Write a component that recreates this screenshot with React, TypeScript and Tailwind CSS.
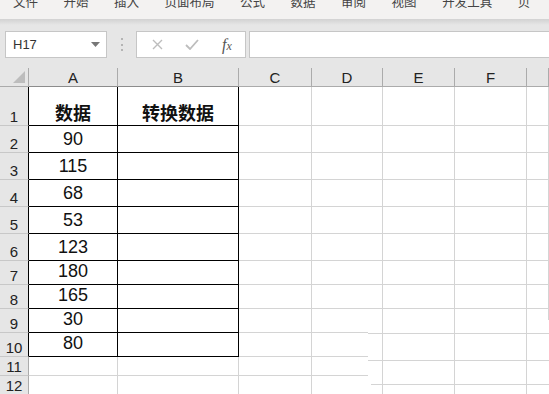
import React from "react";

const TABS = ["文件", "开始", "插入", "页面布局", "公式", "数据", "审阅", "视图", "开发工具", "贝"];

// column widths in px: row header, A..F, G takes the rest
const COLS = ["A", "B", "C", "D", "E", "F", ""];
const ROW_HEIGHTS = [39, 27, 27, 27, 27, 27, 24, 24, 24, 24, 19, 19];
const DATA = [90, 115, 68, 53, 123, 180, 165, 30, 80];

const CJK = "font-['Noto_Sans_CJK_SC','Noto_Sans',sans-serif]";
const NUM = "font-['Liberation_Sans','Noto_Sans_CJK_SC',sans-serif]";

function CornerTriangle() {
  return (
    <svg width="12" height="12" viewBox="0 0 12 12" className="mb-[3px] mr-[3px]">
      <polygon points="12,0 12,12 0,12" fill="#bdbdbd" />
    </svg>
  );
}

function FormulaBar() {
  return (
    <div className="flex h-[43px] items-start bg-[#e6e6e6] pt-[6px]">
      <div className="ml-[5px] flex h-[27px] w-[102px] items-center justify-between border border-[#c6c6c6] bg-white pl-[7px] pr-[6px]">
        <span className={`${NUM} text-[13px] text-[#333]`}>H17</span>
        <svg width="9" height="5" viewBox="0 0 9 5">
          <polygon points="0,0 9,0 4.5,5" fill="#777" />
        </svg>
      </div>
      <div className="ml-[14px] mt-[7px] flex h-[13px] flex-col justify-between">
        <span className="block h-[2px] w-[2px] bg-[#b4b4b4]" />
        <span className="block h-[2px] w-[2px] bg-[#b4b4b4]" />
        <span className="block h-[2px] w-[2px] bg-[#b4b4b4]" />
      </div>
      <div className="ml-[13px] flex h-[27px] w-[110px] items-center border border-[#c6c6c6] bg-white">
        <svg width="11" height="11" viewBox="0 0 11 11" className="ml-[15px]">
          <path d="M1 1 L10 10 M10 1 L1 10" stroke="#bdbdbd" strokeWidth="1.4" />
        </svg>
        <svg width="14" height="11" viewBox="0 0 14 11" className="ml-[22px]">
          <path d="M1 6 L5 10 L13 1" stroke="#bdbdbd" strokeWidth="1.8" fill="none" />
        </svg>
        <span className="ml-[23px] font-['Liberation_Serif',serif] text-[16px] italic leading-none text-[#555]">
          f<span className="text-[12px]">x</span>
        </span>
      </div>
      <div className="ml-[3px] h-[27px] flex-1 border border-r-0 border-[#c6c6c6] bg-white" />
    </div>
  );
}

// a slightly misaligned patch of grid pasted over the lower right corner
function Patch() {
  return (
    <div className="absolute left-[368px] top-[252px] h-[80px] w-[181px] bg-white">
      <div className="absolute left-[14px] top-0 h-[80px] w-px bg-[#d4d4d4]" />
      <div className="absolute left-[86px] top-0 h-[80px] w-px bg-[#d4d4d4]" />
      <div className="absolute left-[158px] top-0 h-[80px] w-px bg-[#d4d4d4]" />
      <div className="absolute left-0 top-[13px] h-px w-[181px] bg-[#d4d4d4]" />
      <div className="absolute left-0 top-[40px] h-px w-[181px] bg-[#d4d4d4]" />
      <div className="absolute left-[3px] top-[64px] h-px w-[178px] bg-[#d4d4d4]" />
    </div>
  );
}

function Sheet() {
  const widths = "grid-cols-[29px_89px_121px_73px_71px_72px_72px_1fr]";
  return (
    <div className={`relative grid ${widths}`}>
      {/* column header row */}
      <div className="flex h-[19px] items-end justify-end border-b border-r border-[#ababab] bg-[#e6e6e6]">
        <CornerTriangle />
      </div>
      {COLS.map((c, i) => (
        <div
          key={"h" + i}
          className={`flex h-[19px] items-end justify-center border-b border-r bg-[#e6e6e6] pb-[1px] ${NUM} text-[15px] leading-none text-[#222] ${
            i < 2 ? "border-b-[#8c8c8c] border-r-[#ababab]" : "border-[#ababab]"
          }`}
        >
          {c}
        </div>
      ))}

      {ROW_HEIGHTS.map((h, r) => {
        const inTable = r < 10;
        return (
          <React.Fragment key={r}>
            <div
              style={{ height: h }}
              className={`flex items-end justify-center border-b border-b-[#c8c8c8] bg-[#e6e6e6] pb-[1px] ${NUM} text-[15px] leading-none text-[#222] ${
                inTable ? "border-r border-r-black" : "border-r border-r-[#ababab]"
              }`}
            >
              {r + 1}
            </div>
            {COLS.map((_, c) => {
              const black = inTable && c < 2;
              let content: React.ReactNode = null;
              if (c === 0 && r === 0) content = <span className={`${CJK} text-[18px] font-bold`}>数据</span>;
              if (c === 1 && r === 0) content = <span className={`${CJK} text-[18px] font-bold`}>转换数据</span>;
              if (c === 0 && r > 0 && r < 10) content = <span className={`${NUM} text-[18px]`}>{DATA[r - 1]}</span>;
              return (
                <div
                  key={c}
                  style={{ height: h }}
                  className={`flex items-end justify-center border-b border-r pb-[4px] leading-none text-[#111] ${
                    black ? "border-black" : "border-[#d4d4d4]"
                  }`}
                >
                  {content}
                </div>
              );
            })}
          </React.Fragment>
        );
      })}
      <Patch />
    </div>
  );
}

export default function App() {
  return (
    <div className="h-[394px] w-[549px] overflow-hidden bg-white">
      <div className="h-[19px] overflow-hidden bg-[#f3f2f1]">
        <div className={`-mt-[4px] flex gap-[25.5px] pl-[13px] ${CJK} text-[12.5px] leading-none text-[#444]`}>
          {TABS.map((t) => (
            <span key={t} className="whitespace-nowrap">
              {t}
            </span>
          ))}
        </div>
      </div>
      <div className="h-[6px] bg-gradient-to-b from-[#d2d2d2] to-[#e6e6e6]" />
      <FormulaBar />
      <Sheet />
    </div>
  );
}
